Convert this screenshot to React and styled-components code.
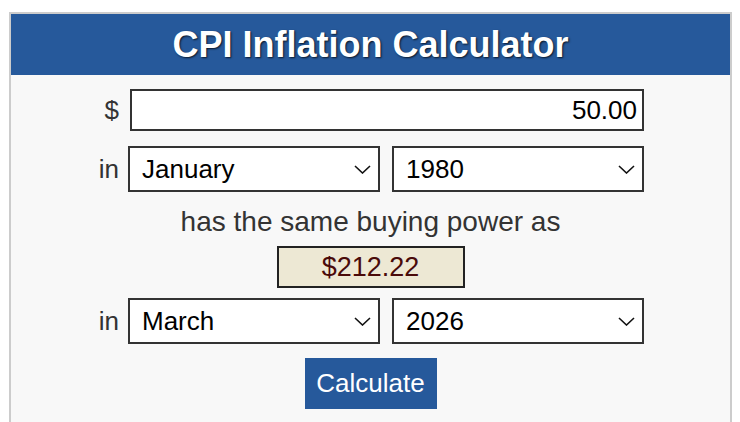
import React, { useState } from "react";
import styled, { createGlobalStyle } from "styled-components";

const GlobalStyle = createGlobalStyle`
  html, body {
    margin: 0;
    padding: 0;
    background: #ffffff;
    font-family: "Liberation Sans", Arial, Helvetica, sans-serif;
  }
`;

const Panel = styled.div`
  width: 719px;
  margin: 12px 0 0 9px;
  border: 2px solid #cccccc;
  background: #f8f8f8;
  height: 420px;
`;

const Header = styled.h1`
  margin: 0;
  height: 61px;
  background: #26599b;
  color: #ffffff;
  font-size: 36px;
  font-weight: bold;
  line-height: 61px;
  text-align: center;
  text-shadow: 1px 1px 2px rgba(0, 0, 0, 0.75);
`;

const Body = styled.div`
  padding-top: 14px;
  display: flex;
  flex-direction: column;
  align-items: stretch;
`;

const Row = styled.div`
  display: grid;
  grid-template-columns: 108px 516px;
  column-gap: 9px;
  align-items: center;
  margin-top: ${(p) => p.$top || 0}px;
`;

const Label = styled.span`
  text-align: right;
  font-size: 26px;
  color: #333333;
`;

const Pair = styled.div`
  display: grid;
  grid-template-columns: 252px 252px;
  column-gap: 12px;
`;

const AmountInput = styled.input`
  box-sizing: border-box;
  margin: 0 0 0 2px;
  width: 514px;
  height: 42px;
  border: 2px solid #333333;
  background: #ffffff;
  padding: 0 5px;
  text-align: right;
  font-family: inherit;
  font-size: 26px;
  color: #000000;
  outline: none;
`;

const SelectWrap = styled.div`
  position: relative;
  height: 46px;
`;

const Select = styled.select`
  appearance: none;
  box-sizing: border-box;
  width: 100%;
  height: 46px;
  margin: 0;
  border: 2px solid #333333;
  border-radius: 0;
  background: #ffffff;
  padding: 0 36px 0 12px;
  font-family: inherit;
  font-size: 26px;
  color: #000000;
  outline: none;
`;

const Chevron = styled.svg`
  position: absolute;
  right: 9px;
  top: 19px;
  pointer-events: none;
`;

const Phrase = styled.div`
  margin-top: 15px;
  text-align: center;
  font-size: 28px;
  line-height: 30px;
  color: #333333;
`;

const Result = styled.div`
  box-sizing: border-box;
  align-self: center;
  width: 188px;
  height: 42px;
  margin-top: 9px;
  border: 2px solid #222222;
  background: #ede8d4;
  color: #4a0a0a;
  font-size: 27px;
  line-height: 38px;
  text-align: center;
`;

const CalcButton = styled.button`
  align-self: center;
  margin-top: 14px;
  width: 132px;
  height: 51px;
  border: none;
  background: #26599b;
  color: #ffffff;
  font-family: inherit;
  font-size: 26px;
  padding: 0;
  cursor: pointer;
`;

const months = [
  "January", "February", "March", "April", "May", "June",
  "July", "August", "September", "October", "November", "December",
];
const years = [];
for (let y = 2026; y >= 1913; y--) years.push(String(y));

const DropDown = ({ value, options, onChange }) => (
  <SelectWrap>
    <Select value={value} onChange={(e) => onChange(e.target.value)}>
      {options.map((o) => (
        <option key={o} value={o}>{o}</option>
      ))}
    </Select>
    <Chevron width="17" height="9" viewBox="0 0 17 9">
      <path d="M1 1 L8.5 8 L16 1" fill="none" stroke="#111" strokeWidth="1.6" />
    </Chevron>
  </SelectWrap>
);

export default function App() {
  const [amount, setAmount] = useState("50.00");
  const [fromMonth, setFromMonth] = useState("January");
  const [fromYear, setFromYear] = useState("1980");
  const [toMonth, setToMonth] = useState("March");
  const [toYear, setToYear] = useState("2026");

  return (
    <>
      <GlobalStyle />
      <Panel>
        <Header>CPI Inflation Calculator</Header>
        <Body>
          <Row>
            <Label>$</Label>
            <AmountInput value={amount} onChange={(e) => setAmount(e.target.value)} />
          </Row>
          <Row $top={15}>
            <Label>in</Label>
            <Pair>
              <DropDown value={fromMonth} options={months} onChange={setFromMonth} />
              <DropDown value={fromYear} options={years} onChange={setFromYear} />
            </Pair>
          </Row>
          <Phrase>has the same buying power as</Phrase>
          <Result>$212.22</Result>
          <Row $top={10}>
            <Label>in</Label>
            <Pair>
              <DropDown value={toMonth} options={months} onChange={setToMonth} />
              <DropDown value={toYear} options={years} onChange={setToYear} />
            </Pair>
          </Row>
          <CalcButton>Calculate</CalcButton>
        </Body>
      </Panel>
    </>
  );
}
